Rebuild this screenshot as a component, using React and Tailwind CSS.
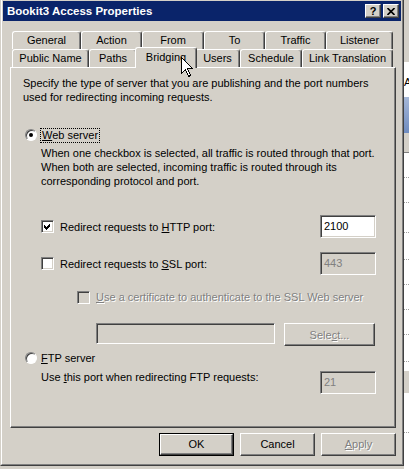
import React from 'react';

const raised =
  'border border-t-white border-l-white border-r-[#404040] border-b-[#404040] shadow-[inset_-1px_-1px_0_#808080]';
const sunken =
  'border border-t-[#808080] border-l-[#808080] border-r-white border-b-white shadow-[inset_1px_1px_0_#404040,inset_-1px_-1px_0_#d4d0c8]';
const grayText = 'text-[#808080] [text-shadow:1px_1px_0_#ffffff]';

const backRow = [
  { label: 'General', w: 'w-[69px]' },
  { label: 'Action', w: 'w-[61px]' },
  { label: 'From', w: 'w-[62px]' },
  { label: 'To', w: 'w-[61px]' },
  { label: 'Traffic', w: 'w-[61px]' },
  { label: 'Listener', w: 'w-[67px]' },
];

const frontRow = [
  { label: 'Public Name', w: 'w-[77px]' },
  { label: 'Paths', w: 'w-[48px]' },
  { label: 'Bridging', w: 'w-[62px]', active: true },
  { label: 'Users', w: 'w-[45px]' },
  { label: 'Schedule', w: 'w-[62px]' },
  { label: 'Link Translation', w: 'w-[91px]' },
];

function Tab({ label, w, active }) {
  if (active) {
    return (
      <div
        className={`${w} h-[21px] -mt-[2px] -mx-[2px] relative z-10 bg-[#d4d0c8] border-l border-t border-r border-l-white border-t-white border-r-[#404040] rounded-t-[3px] shadow-[inset_-1px_0_0_#808080] flex justify-center pt-[3px] leading-[13px]`}
      >
        {label}
      </div>
    );
  }
  return (
    <div
      className={`${w} h-[18px] bg-[#d4d0c8] border-l border-t border-r border-l-white border-t-white border-r-[#404040] rounded-t-[3px] shadow-[inset_-1px_0_0_#808080] flex justify-center pt-[2px] leading-[13px]`}
    >
      {label}
    </div>
  );
}

function Radio({ checked }) {
  return (
    <div className="w-[12px] h-[12px] rounded-full bg-white border border-t-[#808080] border-l-[#808080] border-r-white border-b-white shadow-[inset_1px_1px_0_#404040] flex items-center justify-center">
      {checked && <div className="w-[4px] h-[4px] rounded-full bg-black" />}
    </div>
  );
}

function Checkbox({ checked, disabled }) {
  return (
    <div
      className={`w-[13px] h-[13px] shrink-0 ${sunken} ${disabled ? 'bg-[#d4d0c8]' : 'bg-white'} flex items-center justify-center`}
    >
      {checked && (
        <svg width="9" height="9" viewBox="0 0 9 9" shapeRendering="crispEdges">
          <polygon points="1,3 3,5 7,1 7,4 3,8 1,6" fill="#000" />
        </svg>
      )}
    </div>
  );
}

function PortBox({ value, disabled }) {
  return (
    <div
      className={`w-[56px] h-[23px] ${sunken} ${disabled ? 'bg-[#d4d0c8] text-[#808080]' : 'bg-white'} pl-[3px] pt-[3px] leading-[14px]`}
    >
      {value}
    </div>
  );
}

function Button({ children, primary, disabled }) {
  const face = (
    <div
      className={`h-full w-full ${raised} bg-[#d4d0c8] flex items-center justify-center ${disabled ? grayText : ''}`}
    >
      {children}
    </div>
  );
  if (primary) {
    return <div className="w-[75px] h-[23px] border border-black">{face}</div>;
  }
  return <div className="w-[75px] h-[23px]">{face}</div>;
}

function Cursor() {
  return (
    <svg
      className="absolute left-[181px] top-[57px] z-20"
      width="13"
      height="21"
      viewBox="0 0 13 21"
      shapeRendering="crispEdges"
    >
      <path
        d="M0.5 0.5 L0.5 16.5 L4.5 12.5 L7.5 19.5 L9.5 18.5 L6.5 11.5 L11.5 11.5 Z"
        fill="#fff"
        stroke="#000"
        strokeWidth="1"
      />
    </svg>
  );
}

export default function App() {
  return (
    <div className="w-[409px] h-[469px] bg-[#d4d0c8] flex relative overflow-hidden font-['Liberation_Sans',Arial,sans-serif] text-[11px] text-black">
      {/* dialog */}
      <div className="w-[404px] h-[466px] shrink-0 bg-[#d4d0c8] border-l border-r border-b border-l-[#d4d0c8] border-r-[#404040] border-b-[#404040]">
        <div className="h-full border-l border-r border-b border-l-white border-r-[#808080] border-b-[#808080] pt-[1px] px-[1px]">
          {/* title bar */}
          <div className="h-[20px] bg-[#0a246a] flex items-center pl-[4px] pr-[2px]">
            <span className="text-white font-bold text-[11.5px] leading-[14px]">Bookit3 Access Properties</span>
            <div className="ml-auto flex gap-[2px]">
              <div className={`w-[16px] h-[14px] ${raised} bg-[#d4d0c8] flex items-center justify-center font-bold text-[11px] leading-none`}>
                ?
              </div>
              <div className={`w-[16px] h-[14px] ${raised} bg-[#d4d0c8] flex items-center justify-center`}>
                <svg width="8" height="7" viewBox="0 0 8 7">
                  <path d="M0.5 0 L7.5 7 M7.5 0 L0.5 7" stroke="#000" strokeWidth="1.6" />
                </svg>
              </div>
            </div>
          </div>

          {/* tab control */}
          <div className="ml-[7px] mt-[10px] w-[386px]">
            <div className="flex pl-[2px] h-[18px]">
              {backRow.map((t) => (
                <Tab key={t.label} {...t} />
              ))}
            </div>
            <div className="flex pl-[2px] h-[18px]">
              {frontRow.map((t) => (
                <Tab key={t.label} {...t} />
              ))}
            </div>

            {/* panel */}
            <div className="h-[361px] border border-l-white border-t-white border-r-[#404040] border-b-[#404040] shadow-[inset_-1px_-1px_0_#808080] leading-[14px]">
              <div className="pt-[8px] pl-[12px]">
                Specify the type of server that you are publishing and the port numbers
                <br />
                used for redirecting incoming requests.
              </div>

              <div className="mt-[23px] h-[16px] flex items-center pl-[14px] gap-[3px]">
                <Radio checked />
                <span className="border border-dotted border-black px-[1px] leading-[13px]">
                  <span className="underline">W</span>eb server
                </span>
              </div>

              <div className="mt-[3px] pl-[30px]">
                When one checkbox is selected, all traffic is routed through that port.
                <br />
                When both are selected, incoming traffic is routed through its
                <br />
                corresponding protocol and port.
              </div>

              <div className="mt-[27px] h-[23px] flex items-center pl-[30px] pr-[19px]">
                <Checkbox checked />
                <span className="ml-[6px]">
                  Redirect requests to <span className="underline">H</span>TTP port:
                </span>
                <div className="ml-auto">
                  <PortBox value="2100" />
                </div>
              </div>

              <div className="mt-[14px] h-[23px] flex items-center pl-[30px] pr-[19px]">
                <Checkbox />
                <span className="ml-[6px]">
                  Redirect requests to <span className="underline">S</span>SL port:
                </span>
                <div className="ml-auto">
                  <PortBox value="443" disabled />
                </div>
              </div>

              <div className="mt-[15px] h-[14px] flex items-center pl-[66px]">
                <Checkbox disabled />
                <span className={`ml-[6px] ${grayText}`}>
                  <span className="underline">U</span>se a certificate to authenticate to the SSL Web server
                </span>
              </div>

              <div className="mt-[19px] flex items-start pl-[85px]">
                <div className={`w-[179px] h-[21px] ${sunken} bg-[#d4d0c8]`} />
                <div className={`ml-[9px] w-[91px] h-[23px] ${raised} bg-[#d4d0c8] flex items-center justify-center ${grayText}`}>
                  Sele<span className="underline">c</span>t...
                </div>
              </div>

              <div className="mt-[5px] h-[14px] flex items-center pl-[14px] gap-[4px]">
                <Radio />
                <span>
                  <span className="underline">F</span>TP server
                </span>
              </div>

              <div className="mt-[5px] flex items-start pl-[30px] pr-[19px]">
                <span>
                  Use <span className="underline">t</span>his port when redirecting FTP requests:
                </span>
                <div className="ml-auto mt-[1px]">
                  <PortBox value="21" disabled />
                </div>
              </div>
            </div>
          </div>

          {/* buttons */}
          <div className="mt-[5px] flex justify-end gap-[6px] pr-[5px]">
            <Button primary>OK</Button>
            <Button>Cancel</Button>
            <Button disabled>
              <span>
                <span className="underline">A</span>pply
              </span>
            </Button>
          </div>
        </div>
      </div>

      {/* window behind, visible at the right edge */}
      <div className="flex-1 flex flex-col">
        <div className="h-[62px] bg-[#d4d0c8]" />
        <div className="h-[35px] bg-white text-[11px] leading-[14px] pt-[13px] overflow-hidden">A</div>
        <div className="h-[36px] bg-gradient-to-b from-[#a6b8d8] to-[#6f8cc0]" />
        <div className="h-[20px] bg-[#d4d0c8] border-b border-[#808080]" />
        <div className="h-[218px] bg-white flex flex-col">
          <div className="h-[25px] border-b border-dotted border-[#a0a0a0]" />
          <div className="h-[25px] border-b border-dotted border-[#a0a0a0]" />
          <div className="h-[30px] border-b border-dotted border-[#a0a0a0]" />
          <div className="h-[27px] border-b border-dotted border-[#a0a0a0]" />
          <div className="h-[25px] border-b border-dotted border-[#a0a0a0]" />
          <div className="h-[25px] border-b border-dotted border-[#a0a0a0]" />
          <div className="h-[25px] border-b border-dotted border-[#a0a0a0]" />
          <div className="h-[27px] border-b border-dotted border-[#a0a0a0]" />
        </div>
        <div className="h-[22px] bg-[#d4d0c8]" />
        <div className="flex-1 bg-white flex flex-col">
          <div className="h-[40px] border-b border-dotted border-[#a0a0a0]" />
        </div>
      </div>

      <Cursor />
    </div>
  );
}
